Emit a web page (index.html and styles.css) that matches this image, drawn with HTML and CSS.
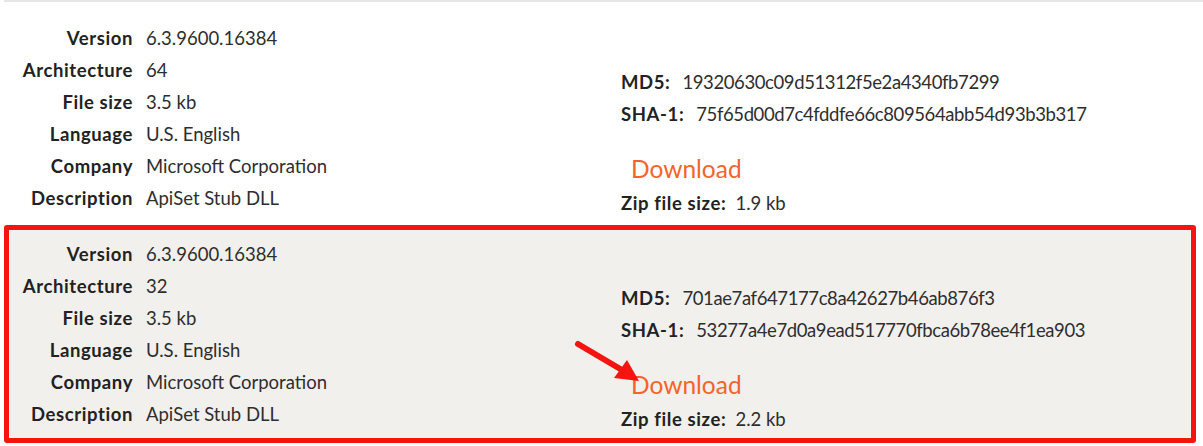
FILE: index.html
```html
<!DOCTYPE html>
<html>
<head>
<meta charset="utf-8">
<link rel="stylesheet" href="styles.css">
</head>
<body>
<div class="list">
  <div class="top-rule"></div>
  <div class="row">
    <dl class="info">
      <dt>Version</dt><dd>6.3.9600.16384</dd>
      <dt>Architecture</dt><dd>64</dd>
      <dt>File size</dt><dd>3.5 kb</dd>
      <dt>Language</dt><dd>U.S. English</dd>
      <dt>Company</dt><dd>Microsoft Corporation</dd>
      <dt>Description</dt><dd>ApiSet Stub DLL</dd>
    </dl>
    <div class="hashes">
      <div class="hash"><b>MD5:</b><span class="md5">19320630c09d51312f5e2a4340fb7299</span></div>
      <div class="hash"><b>SHA-1:</b><span class="sha">75f65d00d7c4fddfe66c809564abb54d93b3b317</span></div>
      <a class="download" href="#">Download</a>
      <div class="zip"><b>Zip file size:</b><span class="zipv">1.9 kb</span></div>
    </div>
  </div>
  <div class="row marked">
    <dl class="info">
      <dt>Version</dt><dd>6.3.9600.16384</dd>
      <dt>Architecture</dt><dd>32</dd>
      <dt>File size</dt><dd>3.5 kb</dd>
      <dt>Language</dt><dd>U.S. English</dd>
      <dt>Company</dt><dd>Microsoft Corporation</dd>
      <dt>Description</dt><dd>ApiSet Stub DLL</dd>
    </dl>
    <div class="hashes">
      <div class="hash"><b>MD5:</b><span class="md5">701ae7af647177c8a42627b46ab876f3</span></div>
      <div class="hash"><b>SHA-1:</b><span class="sha">53277a4e7d0a9ead517770fbca6b78ee4f1ea903</span></div>
      <a class="download" href="#">Download</a>
      <div class="zip"><b>Zip file size:</b><span class="zipv">2.2 kb</span></div>
    </div>
    <svg class="arrow" width="75" height="50" viewBox="0 0 75 50">
      <line x1="8" y1="8" x2="52" y2="34" stroke="#f5140f" stroke-width="6" stroke-linecap="round"/>
      <polygon points="69,45 57,24 44,42" fill="#f5140f"/>
    </svg>
  </div>
</div>
</body>
</html>
```

FILE: styles.css
```css
html, body {
  margin: 0;
  padding: 0;
  background: #ffffff;
}
body {
  font-family: Lato, "Liberation Sans", sans-serif;
  font-size: 18.5px;
  color: #2e2e2e;
}
.list {
  width: 1203px;
}
.top-rule {
  margin-left: 4px;
  border-top: 2px solid #e6e6e6;
}
.row {
  position: relative;
  box-sizing: border-box;
  height: 223px;
  margin: 0 8px 0 5px;
  border: 4px solid transparent;
  border-bottom: 0;
  padding: 16px 0 0 0;
  display: grid;
  grid-template-columns: 612px 1fr;
  align-items: start;
}
.row.marked {
  height: 218px;
  margin: 0 7px 0 4px;
  border: 5px solid #f5140f;
  border-radius: 3px;
  background: #f2f0ed;
  padding: 8px 0 0 0;
  box-shadow: inset 0 0 0 1px #f9f7f5;
}
.info {
  margin: 0;
  display: grid;
  grid-template-columns: 124px 1fr;
  grid-auto-rows: 32px;
  column-gap: 13px;
  line-height: 32px;
}
.info dt {
  font-weight: 700;
  color: #222222;
  text-align: right;
  letter-spacing: 0.6px;
}
.info dd {
  margin: 0;
}
.hashes {
  padding-top: 44px;
  display: flex;
  flex-direction: column;
  align-items: flex-start;
}
.hash, .zip {
  height: 32px;
  line-height: 32px;
}
.hash b, .zip b {
  font-weight: 700;
  color: #222222;
  letter-spacing: 0.6px;
}
.md5, .sha {
  margin-left: 12px;
  letter-spacing: -0.4px;
}
.zipv {
  margin-left: 9px;
}
.download {
  margin-top: 21px;
  margin-left: 10px;
  height: 36px;
  line-height: 36px;
  font-size: 24.5px;
  color: #f4642a;
  text-decoration: none;
}
.arrow {
  position: absolute;
  left: 561px;
  top: 106px;
}
```
